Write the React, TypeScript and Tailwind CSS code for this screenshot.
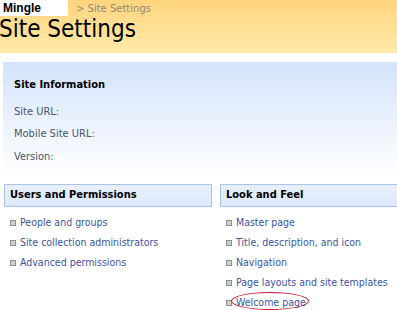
import React from 'react';

const font = { fontFamily: '"DejaVu Sans Condensed", "Liberation Sans", sans-serif' };

const usersLinks = ['People and groups', 'Site collection administrators', 'Advanced permissions'];
const lookLinks = ['Master page', 'Title, description, and icon', 'Navigation', 'Page layouts and site templates', 'Welcome page'];

const Bullet: React.FC = () => (
  <span className="w-[6px] h-[6px] bg-[#cfcfcf] border border-[#8f8f8f] shrink-0" />
);

const Section: React.FC<{ title: string; links: string[]; circled?: string }> = ({ title, links, circled }) => (
  <div className="flex flex-col">
    <div className="h-[23px] border border-[#a9c4ea] bg-gradient-to-b from-[#e8f0fc] to-[#dde9fa] flex items-center pl-[5px] text-[11px] font-bold text-black">
      {title}
    </div>
    <ul className="mt-[6px] flex flex-col">
      {links.map((l) => (
        <li key={l} className="h-[20px] flex items-center gap-[4px] pl-[6px]">
          <Bullet />
          <span className="relative text-[10.5px] text-[#3b55a3] whitespace-nowrap">
            {l}
            {l === circled && (
              <span className="absolute -left-[5px] -right-[3px] -top-[3px] h-[18px] rounded-[50%] border border-[#c4172f]" />
            )}
          </span>
        </li>
      ))}
    </ul>
  </div>
);

const App: React.FC = () => {
  return (
    <div className="w-[397px] h-[310px] overflow-hidden bg-white" style={font}>
      {/* Header */}
      <div className="h-[53px] bg-gradient-to-b from-[#ffd47d] to-[#ffeaa9]">
        <div className="flex items-center h-[16px]">
          <div className="w-[68px] h-[16px] bg-white flex items-center pl-[3px] text-[12px] font-bold text-black" style={{ fontFamily: '"Liberation Sans", sans-serif' }}>
            Mingle
          </div>
          <span className="ml-[8px] text-[10px] text-[#928a74]" style={{ fontFamily: '"DejaVu Sans", sans-serif' }}>&gt; Site Settings</span>
        </div>
        <h1 className="-ml-[1px] text-[24px] leading-[26px] text-black">Site Settings</h1>
      </div>

      {/* Site information */}
      <div className="mt-[9px] ml-[3px] h-[113px] bg-gradient-to-b from-[#d3e3fb] to-white pl-[11px] pt-[15px]">
        <div className="text-[11px] font-bold text-black h-[16px]">Site Information</div>
        <div className="mt-[8px] flex flex-col text-[11px] text-[#4e5570]">
          <span className="h-[22px] leading-[22px]">Site URL:</span>
          <span className="h-[23px] leading-[22px]">Mobile Site URL:</span>
          <span className="h-[22px] leading-[22px]">Version:</span>
        </div>
      </div>

      {/* Sections */}
      <div className="mt-[9px] grid grid-cols-[208px_1fr] gap-[8px] pl-[4px] -mr-[4px]">
        <Section title="Users and Permissions" links={usersLinks} />
        <Section title="Look and Feel" links={lookLinks} circled="Welcome page" />
      </div>
    </div>
  );
};

export default App;
